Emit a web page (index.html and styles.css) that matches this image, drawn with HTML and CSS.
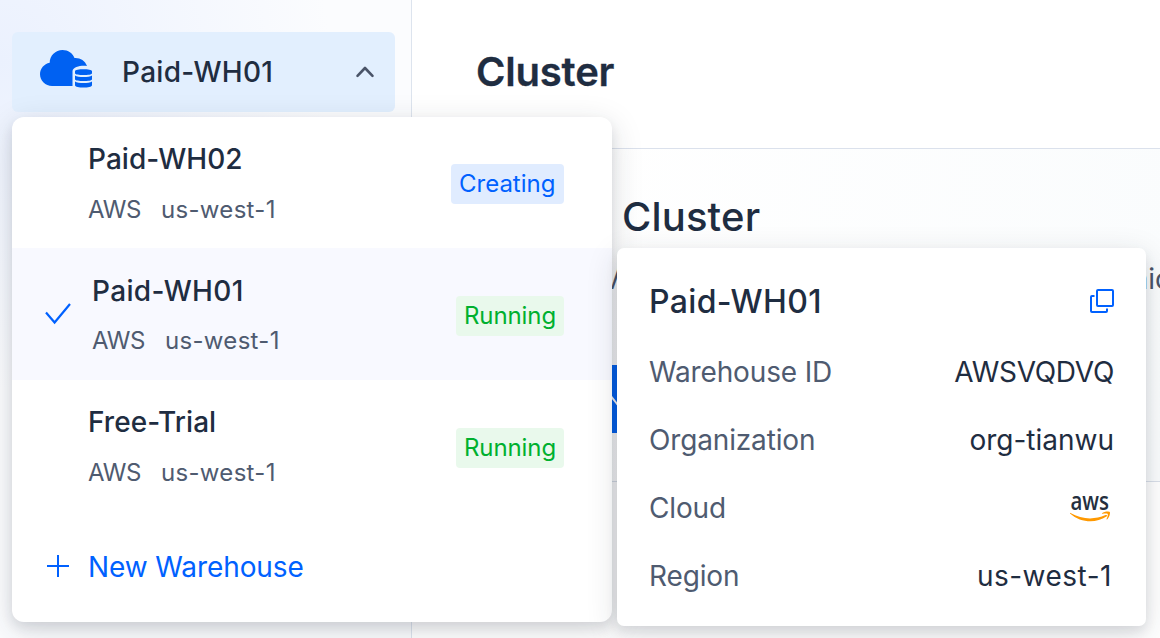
FILE: index.html
```html
<!DOCTYPE html>
<html lang="en">
<head>
<meta charset="utf-8">
<title>Cluster</title>
<link rel="stylesheet" href="styles.css">
</head>
<body>
<div class="app">
  <aside class="sidebar">
    <button class="switcher">
      <svg class="cloud" width="54" height="40" viewBox="0 0 54 40">
        <path fill="#0061f2" d="M12 37C5.500 37 0 31.700 0 25.300C0 19.500 4 15 9.700 13.800C9.700 6.500 15.500 1 22.500 1C28.200 1 32.600 4.200 34.500 9C40 8.600 45 11.500 47 17C42 16 33 17.500 32.500 22V37Z"/>
        <path fill="#0061f2" d="M35 22.200C35 19.600 52 19.600 52 22.200V24.200C52 26.700 35 26.700 35 24.200ZM35 26.500C38 28.500 49 28.500 52 26.500V30.200C52 32.700 35 32.700 35 30.200ZM35 32.600C38 34.600 49 34.600 52 32.600V36.200C52 39.300 35 39.300 35 36.200Z"/>
      </svg>
      <span class="switcher-name">Paid-WH01</span>
      <svg class="chevron" width="20" height="14" viewBox="0 0 20 14"><path fill="none" stroke="#4a5468" stroke-width="2.600" stroke-linecap="round" stroke-linejoin="round" d="M2.500 10.800L10 3L17.500 10.800"/></svg>
    </button>
  </aside>
  <main class="main">
    <header class="topbar"><h1>Cluster</h1></header>
    <section class="intro">
      <h2>Cluster</h2>
      <p class="summary"><span>V</span><span class="summary-end">nic</span></p>
      <div class="action"><svg width="24" height="24" viewBox="0 0 24 24"><path fill="none" stroke="#fff" stroke-width="2" d="M1 0L12 14L23 0"/></svg></div>
    </section>
  </main>
</div>

<div class="menu">
  <div class="item">
    <div class="info"><div class="name">Paid-WH02</div><div class="meta"><span>AWS</span><span class="place">us-west-1</span></div></div>
    <span class="tag creating">Creating</span>
  </div>
  <div class="item selected">
    <svg class="check" width="28" height="24" viewBox="0 0 28 24"><path fill="none" stroke="#0061ff" stroke-width="2.200" d="M2 10.500L10.600 20.500L26 2"/></svg>
    <div class="info"><div class="name">Paid-WH01</div><div class="meta"><span>AWS</span><span class="place">us-west-1</span></div></div>
    <span class="tag running">Running</span>
  </div>
  <div class="item">
    <div class="info"><div class="name">Free-Trial</div><div class="meta"><span>AWS</span><span class="place">us-west-1</span></div></div>
    <span class="tag running">Running</span>
  </div>
  <div class="create">
    <svg width="24" height="24" viewBox="0 0 24 24"><path fill="none" stroke="#0061ff" stroke-width="2" d="M12 0V22M1 11H23"/></svg>
    <span>New Warehouse</span>
  </div>
</div>

<div class="card">
  <div class="card-head">
    <span class="card-title">Paid-WH01</span>
    <svg class="copy" width="26" height="26" viewBox="0 0 26 26"><path fill="none" stroke="#0061ff" stroke-width="2" stroke-linejoin="round" d="M9 1H23Q24 1 24 2V16Q24 17 23 17H9Q8 17 8 16V2Q8 1 9 1ZM5.500 7H3Q2 7 2 8V22Q2 23 3 23H17Q18 23 18 22V19.500"/></svg>
  </div>
  <div class="row"><span>Warehouse ID</span><b class="wid">AWSVQDVQ</b></div>
  <div class="row"><span>Organization</span><b>org-tianwu</b></div>
  <div class="row"><span>Cloud</span>
    <svg class="aws" width="42" height="32" viewBox="0 0 42 32">
      <text x="0.500" y="17" textLength="38.500" lengthAdjust="spacingAndGlyphs" class="aws-text">aws</text>
      <path fill="#ff9900" d="M0 19.700C12.500 26.900 24.500 26.800 35.500 22.100C37 21.500 37.800 22.700 36.500 23.600C25.500 30.800 10.500 29.800 0 20.500Z"/>
      <path fill="#ff9900" d="M32 20.300C34 18.400 39 18.100 39.800 19.100C40.500 20.300 39.300 24.500 37.300 26.300C36.700 26.800 36.300 26.500 36.600 25.800C37.400 23.800 38.300 21.600 37.700 20.900C37.100 20.200 34.500 20.500 32.500 20.800C31.900 20.900 31.700 20.600 32 20.300Z"/>
    </svg>
  </div>
  <div class="row"><span>Region</span><b class="region">us-west-1</b></div>
</div>
</body>
</html>
```
FILE: styles.css
```css
* { box-sizing: border-box; }
body {
  margin: 0;
  width: 1160px;
  height: 638px;
  overflow: hidden;
  position: relative;
  font-family: Inter, "Liberation Sans", sans-serif;
  color: #1f2d41;
  background: #fff;
}
h1, h2, p { margin: 0; }
svg { display: block; flex: none; }
.app { display: flex; height: 638px; }
.sidebar {
  width: 412px;
  flex: none;
  padding: 32px 16px 0 12px;
  border-right: 1px solid #dde4ee;
  background: radial-gradient(ellipse 330px 330px at 0 60px, #ebf1fe, #fbfcfe 100%);
}
.switcher {
  display: flex;
  align-items: center;
  width: 383px;
  height: 80px;
  padding: 0 20px 0 28px;
  border: 0;
  border-radius: 6px;
  background: #e2effe;
  color: inherit;
  font: 500 28px Inter, sans-serif;
}
.cloud { margin-top: -7px; }
.switcher-name { margin-left: 28px; flex: 1; text-align: left; letter-spacing: 0.3px; }
.main { flex: 1; min-width: 0; display: flex; flex-direction: column; background: #fff; }
.topbar { height: 149px; padding: 48px 64px; border-bottom: 1px solid #dbe1ec; }
h1 { font-size: 40px; font-weight: 600; line-height: 48px; letter-spacing: -0.2px; -webkit-text-stroke: 0.3px #1f2d41; }
.intro {
  height: 333px;
  padding: 44px 0 0 189px;
  border-bottom: 1px solid #d9dfe9;
  background: linear-gradient(95deg, #fff 20%, #fafcfd);
}
h2 { font-size: 40px; font-weight: 500; line-height: 48px; padding-left: 21px; letter-spacing: 0.15px; }
.summary {
  display: flex;
  justify-content: space-between;
  margin-top: 21px;
  font-size: 28px;
  line-height: 34px;
  color: #4a5468;
}
.summary span:first-child { margin-left: 1px; }
.summary-end { margin-right: -11px; }
.action { width: 70px; height: 68px; margin: 69px 0 0 10px; padding-top: 30px; background: #0061f2; }
.action svg { margin-left: -2px; }
.menu {
  position: absolute;
  left: 12px;
  top: 117px;
  width: 600px;
  height: 505px;
  border-radius: 12px;
  background: #fff;
  overflow: hidden;
  box-shadow: 0 8px 32px rgba(33, 40, 50, 0.15), 0 6px 12px rgba(33, 50, 70, 0.11);
}
.item { display: flex; align-items: center; height: 131px; padding: 2px 48px 0 76px; }
.item.selected { height: 132px; padding-left: 32px; background: #f8f9ff; }
.check { margin: -2px 20px 0 0; }
.info { flex: 1; }
.name { margin-top: -1px; font-size: 28px; font-weight: 500; line-height: 42px; letter-spacing: 0.05px; }
.selected .name { letter-spacing: 0.35px; margin-top: -1px; }
.meta { display: flex; gap: 20px; margin-top: 12px; font-size: 24px; line-height: 36px; color: #4f5b70; letter-spacing: -0.4px; }
.place { letter-spacing: 0.3px; }
.selected .meta { margin-top: 11px; }
.tag { height: 40px; padding: 0 8px; border-radius: 4px; font-size: 24px; line-height: 40px; }
.creating { width: 113px; background: #e0ecff; color: #0061ff; }
.running { width: 108px; letter-spacing: -0.1px; background: #e9f9ec; color: #00b02f; margin-top: 2px; }
.create { display: flex; align-items: center; gap: 18px; height: 111px; padding: 0 34px; font-size: 28px; letter-spacing: -0.1px; color: #0061ff; }
.card {
  position: absolute;
  left: 617px;
  top: 248px;
  width: 529px;
  height: 378px;
  padding: 19px 32px;
  border-radius: 7px;
  background: #fff;
  box-shadow: 0 8px 32px rgba(33, 40, 50, 0.14), 0 6px 12px rgba(33, 50, 70, 0.11);
}
.card-head, .row { display: flex; align-items: center; justify-content: space-between; height: 68px; }
.card-head { height: 71px; padding-bottom: 3px; }
.card-title { font-size: 32px; font-weight: 500; letter-spacing: 0.35px; }
.copy { margin: 2px -1px 0 0; }
.row { font-size: 28px; color: #4f5b70; letter-spacing: -0.15px; }
.row b { color: #1f2d41; font-weight: 400; letter-spacing: 0; }
.row .wid { letter-spacing: -0.3px; }
.row .region { margin-right: 2px; letter-spacing: 0.5px; }
.aws { margin: 2px 2px 0 0; }
.aws-text { font: 600 24.5px "Open Sans", sans-serif; letter-spacing: 0; fill: #252f3e; }
```
